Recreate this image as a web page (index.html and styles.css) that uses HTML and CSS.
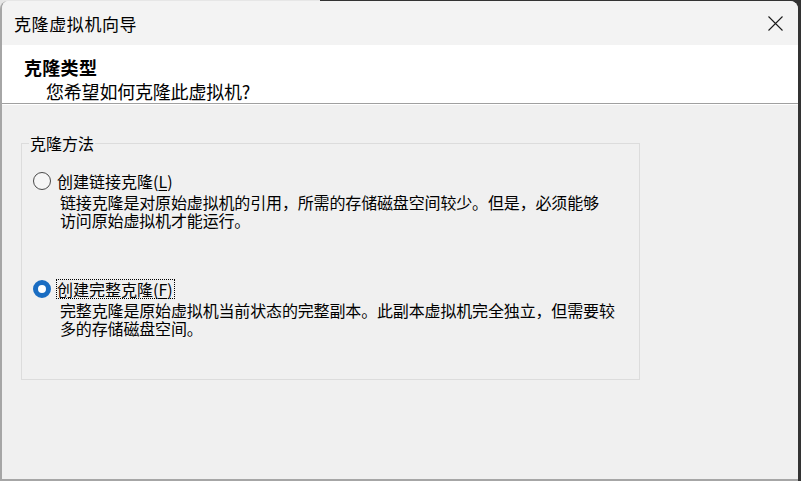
FILE: index.html
```html
<!DOCTYPE html>
<html lang="zh-CN">
<head>
  <meta charset="UTF-8" />
  <title>克隆虚拟机向导</title>
  <link rel="stylesheet" href="styles.css">
</head>
<body>

  <div class="window">
    <!-- TITLE BAR -->
    <div class="titlebar">
      <span class="title">克隆虚拟机向导</span>
      <span class="close">
        <svg width="15" height="15" viewBox="0 0 15 15">
          <path d="M0.5 0.5 L14.5 14.5 M14.5 0.5 L0.5 14.5" stroke="#1b1b1b" stroke-width="1.1" fill="none"/>
        </svg>
      </span>
    </div>

    <!-- HEADER -->
    <div class="header">
      <div class="header-title">克隆类型</div>
      <div class="header-sub">您希望如何克隆此虚拟机?</div>
    </div>

    <!-- CLONE METHOD -->
    <div class="content">
      <fieldset class="group">
        <legend>克隆方法</legend>

        <div class="option">
          <label class="radio-row">
            <input type="radio" name="clone" value="linked">
            <span class="radio-label">创建链接克隆(<u>L</u>)</span>
          </label>
          <p class="desc">链接克隆是对原始虚拟机的引用，所需的存储磁盘空间较少。但是，必须能够<br>访问原始虚拟机才能运行。</p>
        </div>

        <div class="option second">
          <label class="radio-row">
            <input type="radio" name="clone" value="full" checked>
            <span class="radio-label focused">创建完整克隆(<u>F</u>)</span>
          </label>
          <p class="desc">完整克隆是原始虚拟机当前状态的完整副本。此副本虚拟机完全独立，但需要较<br>多的存储磁盘空间。</p>
        </div>
      </fieldset>
    </div>
  </div>

</body>
</html>
```

FILE: styles.css
```css
body {
  margin: 0;
  height: 481px;
  overflow: hidden;
  background: linear-gradient(to right, #e6e6e6 0, #e6e6e6 40%, #333333 40%);
  font-family: "Noto Sans CJK SC", "Liberation Sans", sans-serif;
  color: #000;
}

/* WINDOW */
.window {
  box-sizing: border-box;
  width: 798px;
  height: 480px;
  margin-top: 1px;
  background-color: #f0f0f0;
  border-left: 2px solid #a6a6a6;
  border-bottom: 2px solid #a6a6a6;
  border-radius: 8px 8px 0 0;
  overflow: hidden;
}

/* TITLE BAR */
.titlebar {
  height: 44px;
  background-color: #f3f3f3;
  display: flex;
  align-items: center;
  justify-content: space-between;
  padding: 0 15px 0 12px;
}

.title {
  font-size: 17px;
  letter-spacing: 0.6px;
}

.close {
  display: flex;
  margin-top: 1px;
}

/* HEADER */
.header {
  height: 59px;
  box-sizing: border-box;
  background-color: #fff;
  padding: 11px 0 0 22px;
  border-bottom: 1px solid #a0a0a0;
  box-shadow: 0 1px 0 #fff;
}

.header-title {
  font-size: 18px;
  font-weight: bold;
  line-height: 22px;
  letter-spacing: 0.3px;
}

.header-sub {
  font-size: 18px;
  line-height: 22px;
  margin-left: 22px;
  letter-spacing: -0.2px;
  margin-top: 2px;
}

/* CONTENT */
.content {
  padding: 31px 0 0 19px;
}

.group {
  box-sizing: border-box;
  width: 619px;
  margin: 0;
  padding: 19px 0 42px 7px;
  border: 1px solid #dcdcdc;
}

.group legend {
  font-size: 16px;
  line-height: 17px;
  padding: 0 1px;
}

.option {
  margin-left: 4px;
}

.option.second {
  margin-top: 50px;
}

.radio-row {
  display: flex;
  align-items: center;
  height: 20px;
}

.radio-row input {
  appearance: none;
  box-sizing: border-box;
  width: 18px;
  height: 18px;
  margin: 0 5px 0 0;
  border: 1px solid #4a4a4a;
  border-radius: 50%;
  background-color: #f6f6f6;
}

.radio-row input:checked {
  border: 5px solid #1a6dc2;
  background-color: #fff;
}

.radio-label {
  font-size: 16px;
  line-height: 18px;
  letter-spacing: 0;
  border: 1px dotted transparent;
  padding-right: 1px;
}

.radio-label.focused {
  border-color: #000;
}

.radio-label u {
  text-underline-offset: 2px;
}

.desc {
  margin: 2px 0 0 27px;
  font-size: 16px;
  line-height: 18px;
  letter-spacing: -0.15px;
}
```
